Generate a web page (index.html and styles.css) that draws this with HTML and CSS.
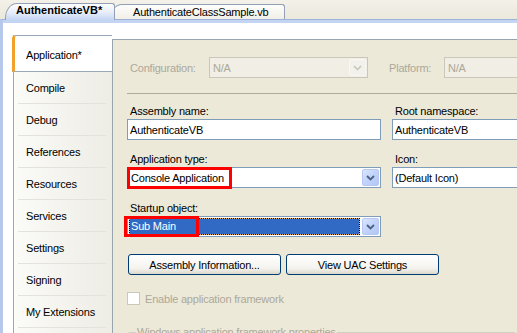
FILE: index.html
```html
<!DOCTYPE html>
<html lang="en">
<head>
    <meta charset="UTF-8">
    <title>AuthenticateVB - Project Designer</title>
    <link rel="stylesheet" href="styles.css">
</head>
<body>
    <div class="tabstrip">
        <div class="doctab active">AuthenticateVB*</div>
        <div class="doctab">AuthenticateClassSample.vb</div>
    </div>

    <div class="docbody">
        <nav class="sidebar">
            <div class="navitem current">Application*</div>
            <div class="navitem">Compile</div>
            <div class="navitem">Debug</div>
            <div class="navitem">References</div>
            <div class="navitem">Resources</div>
            <div class="navitem">Services</div>
            <div class="navitem">Settings</div>
            <div class="navitem">Signing</div>
            <div class="navitem">My Extensions</div>
        </nav>

        <div class="page">
            <div class="configrow">
                <span class="lbl disabled cfg-lbl">Configuration:</span>
                <div class="combo disabled cfg-combo">
                    <span class="val">N/A</span>
                    <span class="dropbtn">
                        <svg width="9" height="6" viewBox="0 0 9 6"><polyline points="1,1 4.5,4.5 8,1" fill="none" stroke="#c9c7ba" stroke-width="1.6"/></svg>
                    </span>
                </div>
                <span class="lbl disabled plat-lbl">Platform:</span>
                <div class="combo disabled plat-combo">
                    <span class="val">N/A</span>
                </div>
            </div>

            <div class="rule"></div>

            <div class="fields">
                <div class="field">
                    <label class="lbl">Assembly name:</label>
                    <div class="textbox">AuthenticateVB</div>
                </div>
                <div class="field">
                    <label class="lbl">Root namespace:</label>
                    <div class="textbox">AuthenticateVB</div>
                </div>
                <div class="field">
                    <label class="lbl">Application type:</label>
                    <div class="combo">
                        <span class="val">Console Application</span>
                        <span class="dropbtn">
                            <svg width="9" height="6" viewBox="0 0 9 6"><polyline points="1,1 4.5,4.5 8,1" fill="none" stroke="#4d6185" stroke-width="1.8"/></svg>
                        </span>
                        <span class="mark mark-type"></span>
                    </div>
                </div>
                <div class="field">
                    <label class="lbl">Icon:</label>
                    <div class="textbox">(Default Icon)</div>
                </div>
                <div class="field startup">
                    <label class="lbl">Startup object:</label>
                    <div class="combo">
                        <span class="val sel">Sub Main</span>
                        <span class="dropbtn">
                            <svg width="9" height="6" viewBox="0 0 9 6"><polyline points="1,1 4.5,4.5 8,1" fill="none" stroke="#4d6185" stroke-width="1.8"/></svg>
                        </span>
                        <span class="mark mark-startup"></span>
                    </div>
                </div>
            </div>

            <div class="buttonrow">
                <button class="xpbutton">Assembly Information...</button>
                <button class="xpbutton">View UAC Settings</button>
            </div>

            <div class="checkrow">
                <span class="checkbox"></span>
                <span class="disabled">Enable application framework</span>
            </div>

            <fieldset class="group">
                <legend>Windows application framework properties</legend>
            </fieldset>
        </div>
    </div>
</body>
</html>
```

FILE: styles.css
```css
* {
    margin: 0;
    padding: 0;
    box-sizing: border-box;
}

body {
    width: 517px;
    height: 333px;
    overflow: hidden;
    font-family: "Liberation Sans", Arial, sans-serif;
    font-size: 11px;
    letter-spacing: -0.2px;
    color: #000;
    background: #ece9d8;
}

/* document tabs */
.tabstrip {
    height: 19px;
    display: flex;
    align-items: flex-end;
    padding-left: 5px;
    background: linear-gradient(#f3f1e9, #ebe8dc);
    position: relative;
    z-index: 1;
}

.doctab {
    width: 175px;
    height: 15px;
    margin-left: -5px;
    padding-left: 22px;
    padding-top: 1px;
    line-height: 13px;
    white-space: nowrap;
    border: 1px solid #939fb4;
    border-bottom: none;
    border-radius: 12px 3px 0 0 / 15px 3px 0 0;
    background: linear-gradient(#fdfdfb, #f1efe7);
}

.doctab.active {
    width: 110px;
    height: 17px;
    margin-left: 0;
    margin-bottom: -1px;
    padding-left: 10px;
    padding-top: 0;
    font-weight: bold;
    letter-spacing: 0;
    position: relative;
    z-index: 2;
    background: linear-gradient(#fdfdfe, #e6edf9 55%, #c4d5f3);
}

/* window body */
.docbody {
    display: flex;
    align-items: flex-start;
    height: 314px;
    border-top: 1px solid #9db1d9;
    border-left: 3px solid #b6c8ec;
    padding-left: 10px;
    background: linear-gradient(#c4d5f3, #c4d5f3) 0 0 / 100% 3px no-repeat, #fff;
}

.sidebar {
    width: 99px;
    height: 300px;
    margin-top: 15px;
    border-left: 1px solid #9aa7b9;
    background: linear-gradient(to right, #fbfbf8, #edece5);
}

.navitem {
    height: 32px;
    display: flex;
    align-items: center;
    padding-left: 12px;
    background: linear-gradient(#e3e2db, #e3e2db) 4px 100% / 88px 1px no-repeat;
}

.navitem.current {
    height: 37px;
    margin-left: -2px;
    padding-left: 11px;
    padding-top: 3px;
    border: 1px solid #9aa7b9;
    border-left: 3px solid #f2a12a;
    border-right: none;
    border-radius: 4px 0 0 0;
    background: #fff;
}

/* property page */
.page {
    flex: 1;
    height: 300px;
    margin-top: 19px;
    padding-left: 14px;
    overflow: hidden;
    border-top: 1px solid #98a4ae;
    border-left: 1px solid #98a4ae;
    background: #ece9d8;
}

.lbl {
    display: block;
    line-height: 14px;
    padding-left: 3px;
}

.disabled {
    color: #aca899;
}

.configrow {
    display: flex;
    align-items: center;
    padding-top: 17px;
    width: 480px;
}

.cfg-lbl {
    width: 82px;
}

.cfg-combo {
    width: 159px;
}

.plat-lbl {
    width: 55px;
    margin-left: 21px;
    padding-left: 0;
}

.plat-combo {
    width: 140px;
}

.rule {
    height: 1px;
    margin-top: 15px;
    background: #aeab9e;
}

.fields {
    display: grid;
    grid-template-columns: 254px 160px;
    column-gap: 11px;
    row-gap: 12px;
    margin-top: 10px;
}

.field .lbl {
    margin-bottom: 1px;
}

.field.startup {
    margin-top: 1px;
}

.textbox {
    height: 21px;
    display: flex;
    align-items: center;
    padding-left: 2px;
    white-space: nowrap;
    border: 1px solid #7f9db9;
    background: #fff;
}

.combo {
    height: 21px;
    display: flex;
    align-items: center;
    position: relative;
    white-space: nowrap;
    border: 1px solid #7f9db9;
    background: #fff;
}

.combo .val {
    flex: 1;
    padding-left: 3px;
}

.combo.disabled {
    border-color: #c9c7ba;
    background: #f0eee5;
}

.dropbtn {
    width: 17px;
    height: 17px;
    margin: 0 1px 0 2px;
    display: flex;
    align-items: center;
    justify-content: center;
    border: 1px solid #b6c8f2;
    border-radius: 2px;
    background: linear-gradient(135deg, #dbe5fd, #c1d3fa 50%, #b2c7f6);
}

.combo.disabled .dropbtn {
    border-color: #f8f7f3;
    background: #f2f1eb;
}

.combo .val.sel {
    height: 17px;
    margin-left: 1px;
    padding-left: 1px;
    line-height: 15px;
    color: #fff;
    border: 1px dotted #000;
    background: linear-gradient(#316ac5, #316ac5) padding-box, linear-gradient(#eab24a, #eab24a) border-box;
}

/* red annotation boxes drawn over the screenshot */
.mark {
    position: absolute;
    border: 3px solid #f00;
    pointer-events: none;
}

.mark-type {
    left: -1px;
    top: -1px;
    width: 105px;
    height: 22px;
}

.mark-startup {
    left: -4px;
    top: -1px;
    width: 75px;
    height: 21px;
}

.buttonrow {
    display: flex;
    gap: 5px;
    margin-top: 17px;
    padding-left: 1px;
}

.xpbutton {
    width: 153px;
    height: 21px;
    font-family: inherit;
    font-size: 11px;
    letter-spacing: -0.2px;
    color: #000;
    border: 1px solid #003c74;
    border-radius: 3px;
    background: linear-gradient(#fff, #f4f3ee 70%, #dcd8cc);
}

.checkrow {
    display: flex;
    align-items: center;
    gap: 5px;
    margin-top: 17px;
}

.checkbox {
    width: 13px;
    height: 13px;
    border: 1px solid #cac8bb;
    background: #fff;
}

.group {
    width: 390px;
    height: 40px;
    margin-top: 20px;
    padding: 0 8px;
    border: 1px solid #d0d0bf;
    border-radius: 3px;
}

.group legend {
    padding: 0 1px;
    line-height: 14px;
    color: #aca899;
}
```
